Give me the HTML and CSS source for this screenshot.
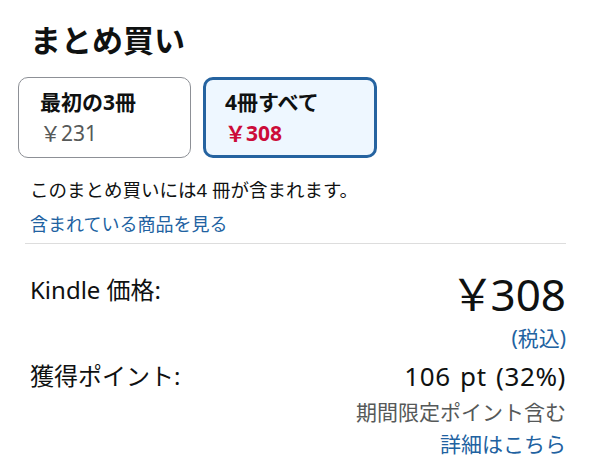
FILE: index.html
```html
<!DOCTYPE html>
<html lang="ja">
<head>
<meta charset="UTF-8" />
<meta name="viewport" content="width=device-width, initial-scale=1" />
<title>まとめ買い</title>
<link rel="stylesheet" href="styles.css">
</head>
<body>
<div class="bundle">
  <h2 class="bundle-title">まとめ買い</h2>

  <div class="options">
    <div class="option">
      <div class="option-name">最初の3冊</div>
      <div class="option-price">￥231</div>
    </div>
    <div class="option selected">
      <div class="option-name">4冊すべて</div>
      <div class="option-price">￥308</div>
    </div>
  </div>

  <p class="bundle-info">このまとめ買いには4 冊が含まれます。</p>
  <a class="link bundle-link" href="#">含まれている商品を見る</a>

  <hr class="divider" />

  <div class="price-row price-row-first">
    <div class="label label-kindle">Kindle 価格:</div>
    <div class="values">
      <div class="big-price"><span class="yen">￥</span>308</div>
      <a class="link sub" href="#">(税込)</a>
    </div>
  </div>

  <div class="price-row">
    <div class="label label-points">獲得ポイント:</div>
    <div class="values">
      <div class="points">106 pt (32%)</div>
      <div class="sub muted">期間限定ポイント含む</div>
      <a class="link sub" href="#">詳細はこちら</a>
    </div>
  </div>
</div>
</body>
</html>
```

FILE: styles.css
```css
* {
  margin: 0;
  padding: 0;
  box-sizing: border-box;
}

body {
  background: #fff;
  color: #0f1111;
  font-family: "Noto Sans", "Noto Sans CJK JP", sans-serif;
}

.bundle {
  width: 591px;
  padding: 20px 25px 0 30px;
}

.bundle-title {
  font-size: 31px;
  line-height: 40px;
  font-weight: 700;
}

/* Option cards */
.options {
  display: flex;
  gap: 12px;
  margin: 17px 0 0 -12px;
}

.option {
  width: 173px;
  height: 81px;
  border: 1px solid #8d9096;
  border-radius: 10px;
  padding: 9px 0 0 21px;
  font-size: 21px;
  line-height: 31px;
}
.option.selected {
  width: 174px;
  border: 3px solid #2563a0;
  background: #eef7ff;
  padding: 7px 0 0 19px;
}

.option-name {
  font-weight: 700;
}
.option-price {
  color: #565959;
}
.option.selected .option-price {
  color: #cc0c39;
  font-weight: 700;
}

/* Info lines */
.bundle-info {
  margin-top: 15px;
  font-size: 18.5px;
  line-height: 34px;
}

.link {
  color: #2162a1;
  text-decoration: none;
}
.bundle-link {
  display: block;
  font-size: 18px;
  line-height: 34px;
}

.divider {
  border: none;
  border-top: 1px solid #dddddd;
  margin: 2px 0 0 -5px;
}

/* Price rows */
.price-row {
  display: flex;
  justify-content: space-between;
  align-items: flex-start;
}
.price-row-first {
  margin-top: 24px;
}

.label {
  font-size: 24px;
}
.label-kindle {
  line-height: 44px;
}
.label-points {
  line-height: 40px;
}

.values {
  display: flex;
  flex-direction: column;
  align-items: flex-end;
  text-align: right;
}

.big-price {
  font-size: 44px;
  line-height: 52px;
}
.big-price .yen {
  margin-right: -4px;
}

.values .sub {
  display: block;
  font-size: 21px;
  line-height: 32px;
}
.big-price + .sub {
  line-height: 36px;
}

.points {
  font-size: 26px;
  line-height: 40px;
  word-spacing: 2px;
  letter-spacing: 0.6px;
}

.muted {
  color: #565959;
}
```
